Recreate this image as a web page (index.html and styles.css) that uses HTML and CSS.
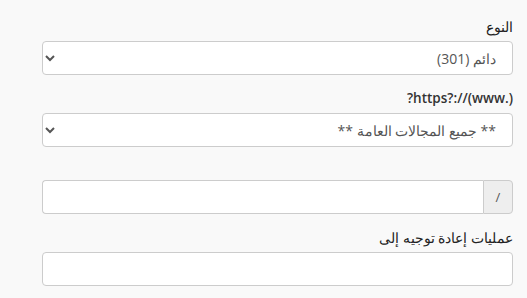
FILE: index.html
```html
<!DOCTYPE html>
<html lang="ar" dir="rtl">
<head>
<meta charset="utf-8">
<link rel="stylesheet" href="styles.css">
</head>
<body>
<form class="form">
  <div class="form-group">
    <label class="label label-ar">النوع</label>
    <select class="control">
      <option>دائم (301)</option>
    </select>
  </div>
  <div class="form-group">
    <label class="label"><span dir="ltr">?https?://(www.)</span></label>
    <select class="control">
      <option>** جميع المجالات العامة **</option>
    </select>
  </div>
  <div class="form-group">
    <div class="spacer"></div>
    <div class="input-group">
      <span class="addon">/</span>
      <input class="control grouped" type="text">
    </div>
  </div>
  <div class="form-group">
    <label class="label label-ar">عمليات إعادة توجيه إلى</label>
    <input class="control" type="text">
  </div>
</form>
</body>
</html>
```
FILE: styles.css
```css
html, body {
  margin: 0;
  background: #f9f9f9;
}
body {
  direction: rtl;
  font-family: "Open Sans", sans-serif;
  font-size: 13px;
  color: #333;
  padding: 17px 14px 0 42px;
}
.form {
  display: flex;
  flex-direction: column;
}
.form-group {
  margin-bottom: 14px;
}
.label {
  display: block;
  font-weight: 600;
  font-size: 13.5px;
  line-height: 19px;
  margin-bottom: 5px;
  text-align: right;
}
.label-ar {
  font-weight: 500;
  font-size: 14px;
  color: #222;
}
.spacer {
  height: 19px;
}
.control {
  display: block;
  box-sizing: border-box;
  width: 100%;
  height: 34px;
  padding: 6px 12px;
  font-family: inherit;
  font-size: 14px;
  color: #555;
  background: #fff;
  border: 1px solid #ccc;
  border-radius: 4px;
  outline: none;
}
.input-group {
  display: flex;
}
.addon {
  box-sizing: border-box;
  width: 30px;
  height: 34px;
  display: flex;
  align-items: center;
  justify-content: center;
  background: #eee;
  color: #555;
  border: 1px solid #ccc;
  border-radius: 0 4px 4px 0;
  font-size: 13px;
}
.grouped {
  flex: 1;
  border-right: 0;
  border-radius: 4px 0 0 4px;
}
```
